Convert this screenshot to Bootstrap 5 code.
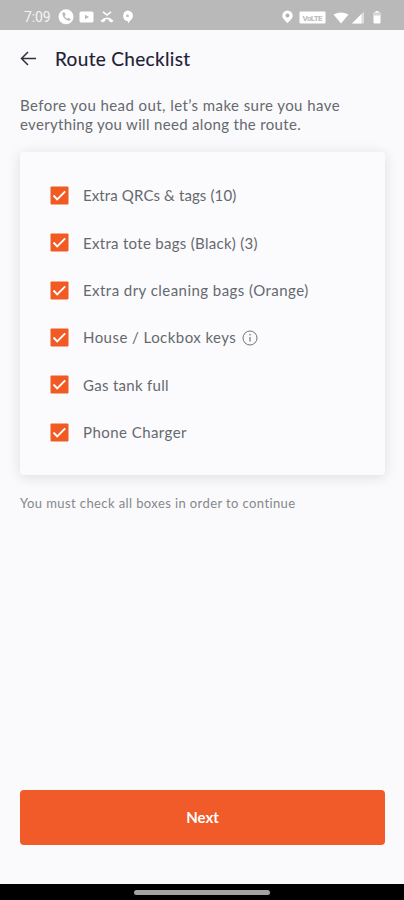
<!DOCTYPE html>
<html lang="en">
<head>
<meta charset="utf-8">
<meta name="viewport" content="width=device-width, initial-scale=1">
<title>Route Checklist</title>
<link href="https://cdn.jsdelivr.net/npm/bootstrap@5.3.0/dist/css/bootstrap.min.css" rel="stylesheet">
<style>
body{font-family:Lato,"Open Sans",sans-serif;background:#fafafc;color:#65696e;height:900px;overflow:hidden}
svg{display:block;flex:none}
.statusbar{height:30px;background:#b9b9ba;color:#fff;padding:4px 22px 0 24px}
.clock{font:14px/26px Roboto,sans-serif;width:34px;letter-spacing:-.1px;opacity:.85}
.topbar{height:57px;padding-left:20px}
.topbar h1{font-size:19px;line-height:24px;color:#1f2035;margin-left:18px;letter-spacing:.33px;-webkit-text-stroke:.15px #1f2035}
.intro{font-size:15px;line-height:19px;padding:9px 20px 0;letter-spacing:.43px}
.intro .second{letter-spacing:.32px}
.checks{margin:18px 19px 0 20px;height:323px;background:#fbfbfd;border-radius:4px;box-shadow:0 2px 13px rgba(30,30,45,.13);padding:20px 30px}
.checks li{height:47.3px;font-size:15px;letter-spacing:.45px}
.checks li.snug{letter-spacing:.12px}
.checks li.close-set{letter-spacing:.3px}
.tick{margin-right:14px}
.info{margin-left:6px}
.note{font-size:13px;line-height:18px;color:#85878b;padding:19px 20px 0;letter-spacing:.4px}
.next{height:55px;margin:0 19px 39px 20px;background:#f15a29;color:#fff;border:0;border-radius:4px;font-size:15px;font-weight:700}
.homebar{height:16px;background:#000}
.pill{width:136px;height:5px;background:#a3a3a3}
</style>
<script src="https://cdn.jsdelivr.net/npm/bootstrap@5.3.0/dist/js/bootstrap.bundle.min.js"></script>
</head>
<body class="d-flex flex-column">
<svg width="0" height="0" class="position-absolute"><defs>
<symbol id="tick" viewBox="0 0 19 19"><rect x=".5" y=".5" width="18" height="18" rx="1" fill="#f15a22"/><path d="M3.500 9.500l3.700 3.800 8-8" fill="none" stroke="#fff" stroke-width="1.900"/></symbol>
</defs></svg>
<header class="statusbar d-flex align-items-center">
<span class="clock">7:09</span>
<svg width="80" height="18" viewBox="58 9 80 18" fill="#fff">
<circle cx="66" cy="17.700" r="7.500"/><path d="M62.600 13.500c-1 3.800 3.200 8.600 7.200 8.300l1-1.500-2.400-1.600-1.300 1c-1.300-.5-2.100-1.500-2.500-2.700l1.200-1.200-1.500-2.500z" fill="#b9b9ba"/>
<rect x="79.500" y="12.500" width="14" height="11" rx="1.500"/><path d="M85 15.800l4 2.200-4 2.200z" fill="#b9b9ba"/>
<path d="M103 12.800l4 3.200 4-3.200" fill="none" stroke="#fff" stroke-width="1.600"/><path d="M100.500 21.800q6.500-6.600 13 0l-1.800 1.800-2.900-1.600v-1.400q-1.800-.6-3.600 0v1.400l-2.900 1.600z"/>
<path d="M127.500 11.500a5.500 5.500 0 0 1 5.500 5.500c0 3-3.500 4.500-4.500 7.500l-.7-2.200a5.500 5.500 0 0 1-.3-10.800z"/><circle cx="127.500" cy="16.800" r="1.500" fill="#c4c4c5"/>
</svg>
<svg class="ms-auto" width="102" height="18" viewBox="280 9 102 18" fill="#fff">
<path d="M287.500 11.500a5.200 5.200 0 0 1 5.200 5.200c0 3-3 4.800-5.200 7.500-2.200-2.700-5.200-4.500-5.200-7.500a5.200 5.200 0 0 1 5.200-5.200z"/><circle cx="287.500" cy="16.500" r="1.900" fill="#b0b0b1"/>
<rect x="299.500" y="12.500" width="26" height="12" rx="1"/><text x="312.500" y="21.500" text-anchor="middle" font-family="Roboto,sans-serif" font-size="8" font-weight="700" fill="#bababb" textLength="20">VoLTE</text>
<path d="M333.500 15.500q7.500-4 15 0L341 24.500z"/><path d="M352 24.500h12v-12z" opacity=".5"/><path d="M352 24.500h9.500v-9.500z"/>
<rect x="373.500" y="13.500" width="7" height="11" rx="1"/><rect x="375.500" y="12" width="3" height="2"/><path d="M373.500 13.500h7v3h-7z" fill="#d5d5d6"/>
</svg>
</header>
<div class="topbar d-flex align-items-center">
<svg width="17" height="16" viewBox="0 0 17 16" fill="none" stroke="#30313d" stroke-width="1.500"><path d="M16 7.500H1.500M8 1L1.500 7.500 8 14"/></svg>
<h1 class="mb-0 fw-normal">Route Checklist</h1>
</div>
<p class="intro mb-0">Before you head out, let’s make sure you have<br><span class="second">everything you will need along the route.</span></p>
<ul class="checks list-unstyled mb-0">
<li class="d-flex align-items-center snug"><svg class="tick" width="19" height="19"><use href="#tick"/></svg><span>Extra QRCs &amp; tags (10)</span></li>
<li class="d-flex align-items-center close-set"><svg class="tick" width="19" height="19"><use href="#tick"/></svg><span>Extra tote bags (Black) (3)</span></li>
<li class="d-flex align-items-center"><svg class="tick" width="19" height="19"><use href="#tick"/></svg><span>Extra dry cleaning bags (Orange)</span></li>
<li class="d-flex align-items-center"><svg class="tick" width="19" height="19"><use href="#tick"/></svg><span>House / Lockbox keys</span><svg class="info" width="16" height="16" viewBox="0 0 16 16"><circle cx="8" cy="8" r="7" fill="none" stroke="#707378"/><path d="M8 7v4.500M8 4v1.500" stroke="#707378" stroke-width="1.200"/></svg></li>
<li class="d-flex align-items-center close-set"><svg class="tick" width="19" height="19"><use href="#tick"/></svg><span>Gas tank full</span></li>
<li class="d-flex align-items-center"><svg class="tick" width="19" height="19"><use href="#tick"/></svg><span>Phone Charger</span></li>
</ul>
<p class="note mb-0">You must check all boxes in order to continue</p>
<button type="button" class="btn next mt-auto">Next</button>
<footer class="homebar d-flex justify-content-center align-items-center"><div class="pill rounded-pill"></div></footer>
</body>
</html>
